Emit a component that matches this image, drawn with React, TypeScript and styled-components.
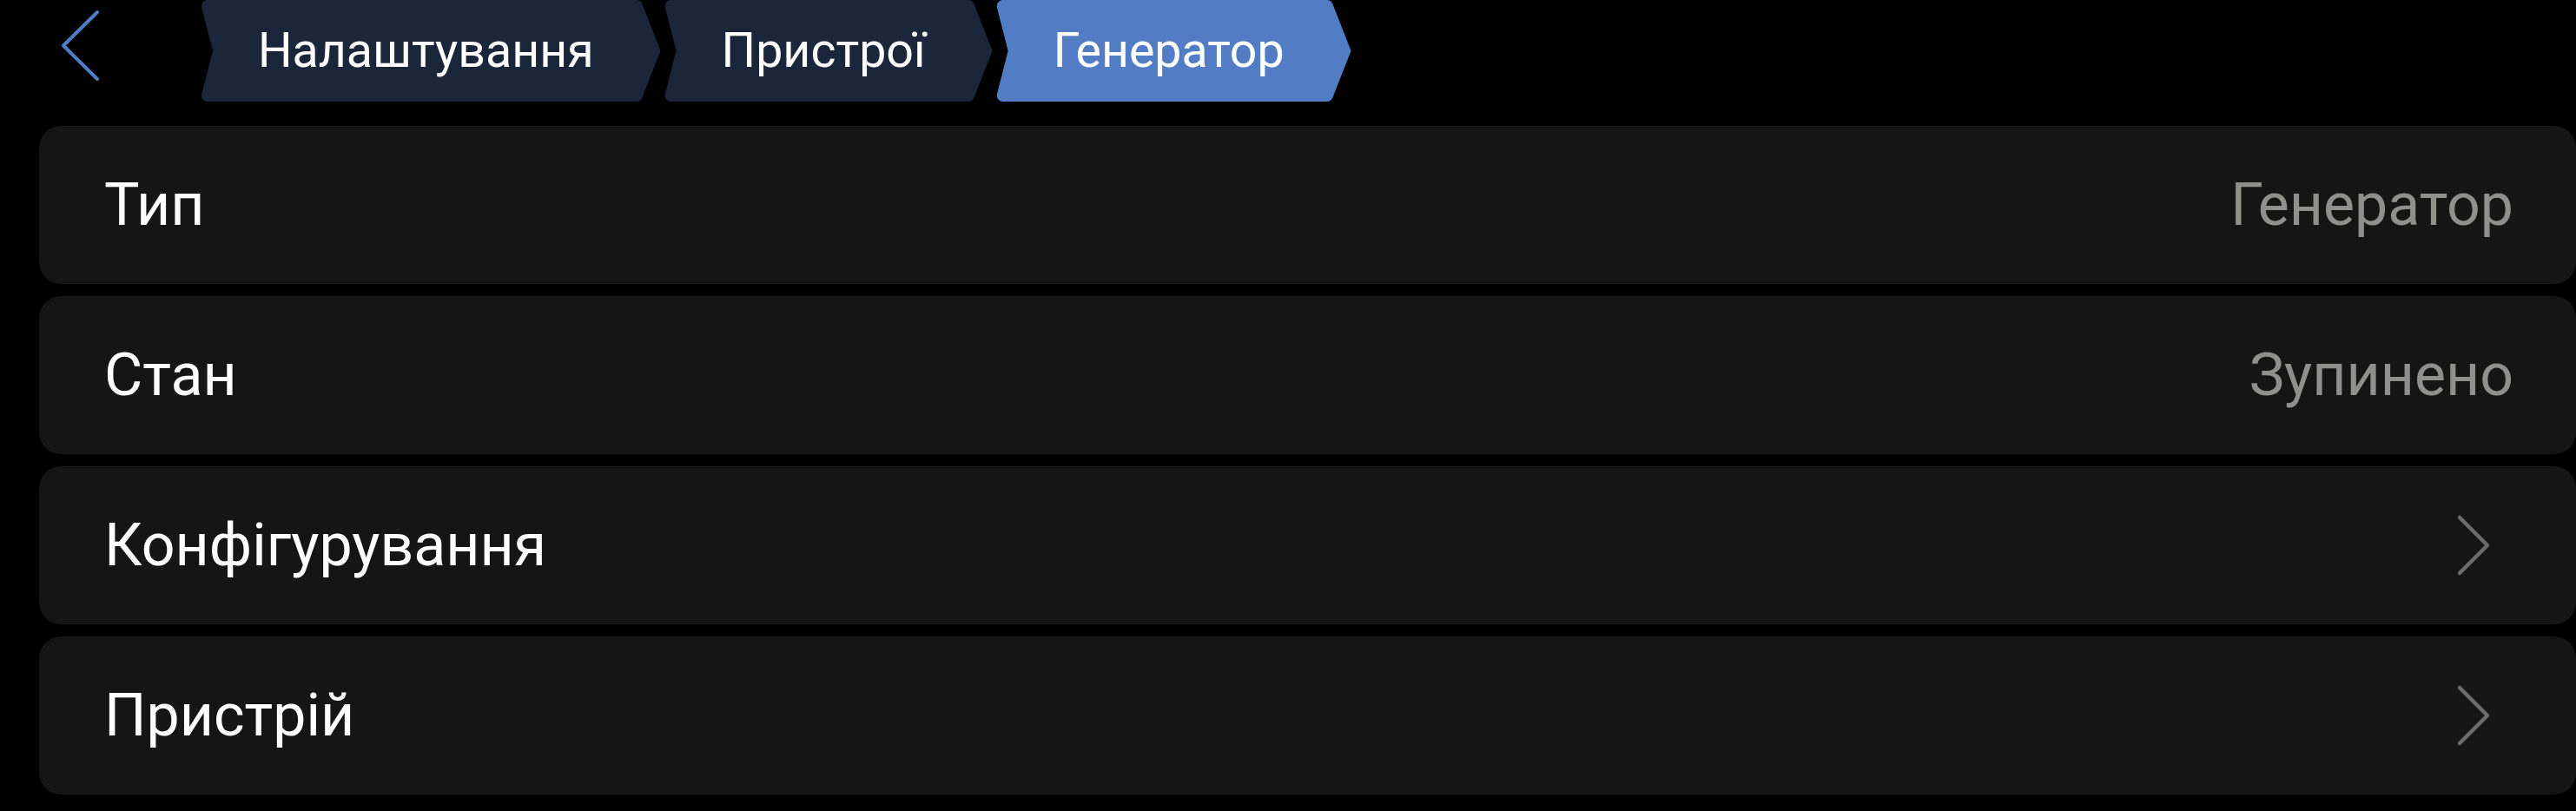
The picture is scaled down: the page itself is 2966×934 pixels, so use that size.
import React from "react";
import styled, { createGlobalStyle } from "styled-components";

const GlobalStyle = createGlobalStyle`
  html, body {
    margin: 0;
    padding: 0;
    background: #000;
  }
  body {
    font-family: Roboto, "Noto Sans", "DejaVu Sans", sans-serif;
    color: #fff;
  }
  * { box-sizing: border-box; }
`;

type Vertex = { x: number; y: number; right: boolean; r: number };

const NOMINAL_W = 1000;
const CRUMB_H = 117;
const TIP = 23;
const NOTCH = 15;

function roundedPolygon(vs: Vertex[]): string {
  const pts: string[] = [];
  const n = vs.length;
  for (let i = 0; i < n; i++) {
    const P = vs[i];
    const A = vs[(i - 1 + n) % n];
    const B = vs[(i + 1) % n];
    const ax = A.x - P.x, ay = A.y - P.y;
    const bx = B.x - P.x, by = B.y - P.y;
    const la = Math.hypot(ax, ay), lb = Math.hypot(bx, by);
    const u1x = ax / la, u1y = ay / la, u2x = bx / lb, u2y = by / lb;
    const theta = Math.acos(Math.max(-1, Math.min(1, u1x * u2x + u1y * u2y)));
    const t = P.r / Math.tan(theta / 2);
    const t1x = P.x + u1x * t, t1y = P.y + u1y * t;
    const t2x = P.x + u2x * t, t2y = P.y + u2y * t;
    let bxn = u1x + u2x, byn = u1y + u2y;
    const bl = Math.hypot(bxn, byn);
    bxn /= bl; byn /= bl;
    const d = P.r / Math.sin(theta / 2);
    const cx = P.x + bxn * d, cy = P.y + byn * d;
    const a1 = Math.atan2(t1y - cy, t1x - cx);
    const a2 = Math.atan2(t2y - cy, t2x - cx);
    let delta = a2 - a1;
    while (delta > Math.PI) delta -= 2 * Math.PI;
    while (delta <= -Math.PI) delta += 2 * Math.PI;
    const steps = 6;
    for (let s = 0; s <= steps; s++) {
      const a = a1 + (delta * s) / steps;
      const x = cx + P.r * Math.cos(a);
      const y = cy + P.r * Math.sin(a);
      const xs = P.right
        ? `calc(100% - ${(NOMINAL_W - x).toFixed(2)}px)`
        : `${x.toFixed(2)}px`;
      pts.push(`${xs} ${y.toFixed(2)}px`);
    }
  }
  return `polygon(${pts.join(", ")})`;
}

const crumbClip = roundedPolygon([
  { x: 0, y: 0, right: false, r: 7 },
  { x: NOMINAL_W - TIP, y: 0, right: true, r: 7 },
  { x: NOMINAL_W, y: CRUMB_H / 2, right: true, r: 3 },
  { x: NOMINAL_W - TIP, y: CRUMB_H, right: true, r: 7 },
  { x: 0, y: CRUMB_H, right: false, r: 7 },
  { x: NOTCH, y: CRUMB_H / 2, right: false, r: 3 },
]);

const Page = styled.div`
  width: 2966px;
  height: 934px;
  background: #000;
  display: flex;
  flex-direction: column;
  overflow: hidden;
`;

const Header = styled.header`
  display: flex;
  align-items: flex-start;
  height: ${CRUMB_H}px;
  padding-left: 68px;
`;

const BackButton = styled.button`
  background: none;
  border: none;
  padding: 0;
  margin: 8px 114px 0 0;
  width: 48px;
  height: 90px;
  display: flex;
  cursor: pointer;
`;

const Crumbs = styled.nav`
  display: flex;
  gap: 3px;
`;

const Crumb = styled.div<{ $active?: boolean }>`
  height: ${CRUMB_H}px;
  display: flex;
  align-items: center;
  padding: 0 77px 0 67px;
  background: ${(p) => (p.$active ? "#527dc5" : "#1b263b")};
  clip-path: ${crumbClip};
  font-size: 55.5px;
  color: #fff;
  white-space: nowrap;
`;

const List = styled.section`
  display: flex;
  flex-direction: column;
  gap: 14px;
  padding: 28px 0 0 45px;
`;

const Row = styled.div`
  height: 182px;
  display: flex;
  align-items: center;
  justify-content: space-between;
  padding: 0 72px 0 75px;
  background: #151515;
  border-radius: 25px;
`;

const Label = styled.span`
  font-size: 68px;
  color: #fff;
`;

const Value = styled.span`
  font-size: 68px;
  color: #8f8f8b;
`;

const ChevronIcon = styled.svg`
  width: 44px;
  height: 76px;
  margin-right: 24px;
  display: block;
  flex: none;
`;

const Chevron = () => (
  <ChevronIcon viewBox="0 0 44 76" fill="none">
    <path
      d="M6 6 L38 38 L6 70"
      stroke="#6b6b67"
      strokeWidth={4.5}
      strokeLinecap="round"
      strokeLinejoin="round"
    />
  </ChevronIcon>
);

const BackIcon = () => (
  <svg width="48" height="90" viewBox="0 0 48 90" fill="none">
    <path
      d="M44 6 L5 44.5 L44 83"
      stroke="#507cc6"
      strokeWidth={4}
      strokeLinecap="round"
      strokeLinejoin="round"
    />
  </svg>
);

const crumbs = [
  { label: "Налаштування", active: false },
  { label: "Пристрої", active: false },
  { label: "Генератор", active: true },
];

const rows: { label: string; value?: string; link?: boolean }[] = [
  { label: "Тип", value: "Генератор" },
  { label: "Стан", value: "Зупинено" },
  { label: "Конфігурування", link: true },
  { label: "Пристрій", link: true },
];

export default function App() {
  return (
    <>
      <GlobalStyle />
      <Page>
        <Header>
          <BackButton aria-label="Назад">
            <BackIcon />
          </BackButton>
          <Crumbs>
            {crumbs.map((c) => (
              <Crumb key={c.label} $active={c.active}>
                {c.label}
              </Crumb>
            ))}
          </Crumbs>
        </Header>
        <List>
          {rows.map((r) => (
            <Row key={r.label}>
              <Label>{r.label}</Label>
              {r.value ? <Value>{r.value}</Value> : null}
              {r.link ? <Chevron /> : null}
            </Row>
          ))}
        </List>
      </Page>
    </>
  );
}
